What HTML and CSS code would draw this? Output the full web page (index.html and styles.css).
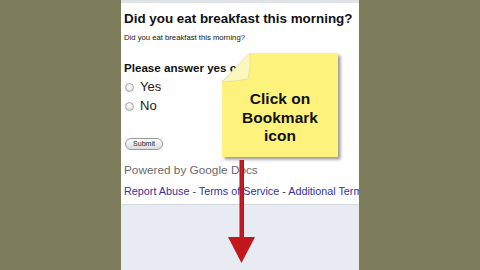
FILE: index.html
```html
<!DOCTYPE html>
<html>
<head>
<meta charset="utf-8">
<link rel="stylesheet" href="styles.css">
</head>
<body>
<div class="page">
  <div class="topband"></div>
  <div class="content">
    <h1 class="title">Did you eat breakfast this morning?</h1>
    <p class="subtitle">Did you eat breakfast this morning?</p>
    <p class="question">Please answer yes or no</p>
    <div class="option"><span class="radio"></span><span>Yes</span></div>
    <div class="option"><span class="radio"></span><span>No</span></div>
    <div class="submit">Submit</div>
    <p class="powered">Powered by Google Docs</p>
    <p class="links">Report Abuse - Terms of Service - Additional Terms</p>
  </div>
  <div class="footer"></div>

  <div class="note">
    <svg class="note-bg" width="124" height="114" viewBox="0 0 124 114">
      <defs>
        <filter id="sh" x="-10%" y="-10%" width="130%" height="130%">
          <feDropShadow dx="2.5" dy="2.5" stdDeviation="1.5" flood-color="#555" flood-opacity="0.6"/>
        </filter>
      </defs>
      <path d="M28,3 L116,3 L116,107 L0,107 L0,32 Z" fill="#fdf37c" filter="url(#sh)"/>
      <path d="M28,3 L0,32 Q16,31 26,29 Q29,18 28,3 Z" fill="#fcf8bd" stroke="#d8d19a" stroke-width="0.6"/>
    </svg>
    <div class="note-text">Click on<br>Bookmark<br>icon</div>
  </div>

  <svg class="arrow" width="32" height="108" viewBox="0 0 32 108">
    <defs>
      <linearGradient id="shaft" x1="0" x2="1" y1="0" y2="0">
        <stop offset="0" stop-color="#a3121a"/>
        <stop offset="0.5" stop-color="#cf2027"/>
        <stop offset="1" stop-color="#a3121a"/>
      </linearGradient>
    </defs>
    <rect x="13.5" y="2" width="4.5" height="80" fill="url(#shaft)"/>
    <polygon points="2,79 29,79 15.5,105" fill="#c3171e"/>
  </svg>
</div>
</body>
</html>
```

FILE: styles.css
```css
html, body {
  margin: 0;
  padding: 0;
}
body {
  background: #7e7d5b;
  font-family: "Liberation Sans", Arial, sans-serif;
  color: #111;
}
.page {
  position: relative;
  width: 238px;
  height: 270px;
  margin: 0 auto;
  display: flex;
  flex-direction: column;
  overflow: hidden;
  background: #fff;
}
.topband {
  height: 3px;
  background: #dfe3e7;
}
.content {
  height: 201px;
  padding: 0 0 0 3px;
  background: #fff;
  overflow: hidden;
  display: flex;
  flex-direction: column;
  align-items: flex-start;
}
.title {
  margin: 8px 0 0 0;
  font-size: 13.4px;
  line-height: 16px;
  font-weight: bold;
  white-space: nowrap;
}
.subtitle {
  margin: 6px 0 0 0;
  font-size: 7.7px;
  line-height: 10px;
  white-space: nowrap;
}
.question {
  margin: 18px 0 0 0;
  font-size: 11.6px;
  line-height: 14px;
  font-weight: bold;
  white-space: nowrap;
}
.option {
  display: flex;
  align-items: center;
  gap: 6px;
  height: 19px;
  font-size: 13px;
  line-height: 19px;
  color: #222;
}
.option:first-of-type {
  margin-top: 2px;
}
.radio {
  display: inline-block;
  width: 7px;
  height: 7px;
  margin-left: 1px;
  margin-top: 1px;
  border: 1px solid #a6a6a6;
  border-radius: 50%;
  background: radial-gradient(circle at 50% 35%, #ffffff 0%, #e4e4e4 70%, #c8c8c8 100%);
}
.submit {
  margin: 23px 0 0 1px;
  width: 36px;
  height: 10px;
  border: 1px solid #9a9a9a;
  border-radius: 6px;
  background: linear-gradient(#ffffff, #dcdcdc);
  font-size: 7px;
  line-height: 10px;
  text-align: center;
  color: #222;
}
.powered {
  margin: 13px 0 0 0;
  font-size: 11.8px;
  line-height: 14px;
  color: #6a6a6a;
  white-space: nowrap;
}
.links {
  margin: 8px 0 0 0;
  font-size: 10.8px;
  line-height: 13px;
  color: #34349a;
  white-space: nowrap;
}
.footer {
  flex: 1;
  border-top: 1px solid #d4d8dd;
  background: #e8ecf2;
}
.note {
  position: absolute;
  left: 101px;
  top: 50px;
  width: 116px;
  height: 107px;
}
.note-bg {
  position: absolute;
  left: 0;
  top: 0;
}
.note-text {
  position: relative;
  padding-top: 40px;
  text-align: center;
  font-size: 15.5px;
  line-height: 18.5px;
  font-weight: bold;
  color: #111;
}
.arrow {
  position: absolute;
  left: 105px;
  top: 158px;
}
```
